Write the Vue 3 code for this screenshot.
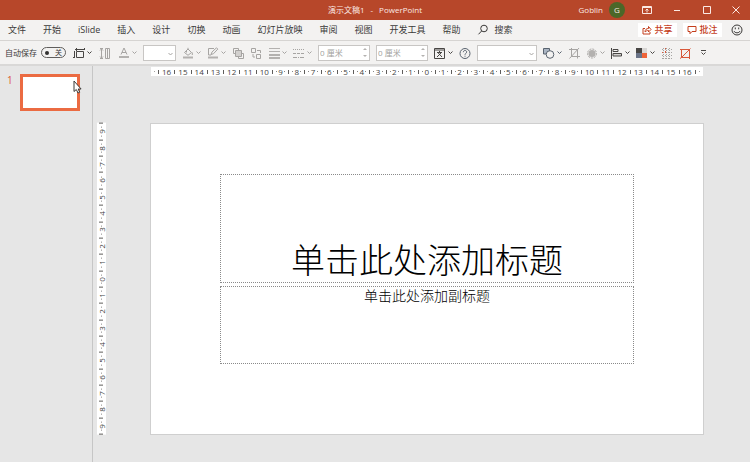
<script setup>
import { ref } from 'vue'

const tabs = ['文件', '开始', 'iSlide', '插入', '设计', '切换', '动画', '幻灯片放映', '审阅', '视图', '开发工具', '帮助']
const autosave = ref(false)
const spinA = ref('0 厘米')
const spinB = ref('0 厘米')

const scale = (n) => Array.from({ length: n * 2 + 1 }, (_, i) => Math.abs(i - n))
const across = scale(16)
const down = scale(9)
</script>

<template>
  <div class="app">
    <header class="titlebar">
      <span></span>
      <div class="doc-name"><span>演示文稿1</span><span>-</span><span>PowerPoint</span></div>
      <div class="account">
        <span class="user">Goblin</span>
        <span class="avatar">G</span>
        <button class="win" aria-label="功能区显示选项">
          <svg viewBox="0 0 12 12"><path d="M1.5 2.5h9v7h-9zM1.5 3.5h9M6 8.5v-3M4.5 6.5 6 5l1.500 1.500" /></svg>
        </button>
        <button class="win" aria-label="最小化"><svg viewBox="0 0 12 12"><path d="M3 6.500h6" /></svg></button>
        <button class="win" aria-label="最大化"><svg viewBox="0 0 12 12"><path d="M2.500 2.500h7v7h-7z" /></svg></button>
        <button class="win" aria-label="关闭"><svg viewBox="0 0 12 12"><path d="m2.500 2.500 7 7M9.500 2.500l-7 7" /></svg></button>
      </div>
    </header>

    <nav class="ribbon">
      <button v-for="t in tabs" :key="t" class="tab">{{ t }}</button>
      <button class="tab search">
        <svg viewBox="0 0 12 12"><circle cx="7" cy="4.500" r="3.300" /><path d="M4.600 7 1.500 10.300" /></svg>
        <span>搜索</span>
      </button>
      <div class="actions">
        <button class="action">
          <svg viewBox="0 0 10 10"><path d="M3 3.500H1v5.500h7V7M3 7c0-2.500 1.500-3.500 3.500-3.500V1.500L9 4.500 6.500 7V5.500C5 5.500 4 6 3 7z" /></svg>
          <span>共享</span>
        </button>
        <button class="action">
          <svg viewBox="0 0 10 10"><path d="M1 1.500h8v5H5L3 8.700V6.500H1z" /></svg>
          <span>批注</span>
        </button>
        <button class="smile" aria-label="反馈">
          <svg viewBox="0 0 12 12"><circle cx="6" cy="6" r="5" /><path d="M4.300 3.500v1.800M7.700 3.500v1.800M3 7c.8 2.400 5.200 2.400 6 0" /></svg>
        </button>
      </div>
    </nav>

    <div class="toolbar">
      <label class="autosave">
        <span>自动保存</span>
        <input v-model="autosave" type="checkbox" role="switch" />
        <span class="switch"><i></i><b>关</b></span>
      </label>
      <div class="lead-tools">
        <button class="tool dark" aria-label="大小">
          <svg class="ico" viewBox="0 0 12 12"><path d="M3.500 4.500h7v6h-7zM2 2.500h10M3.500 1v3M11.500 1v2M1.500 4v7M0 10.500h2" /></svg>
          <svg class="chev" viewBox="0 0 5 12"><path d="m.5 4.500 2 2 2-2" /></svg>
        </button>
        <button class="tool" aria-label="高度">
          <svg class="ico" viewBox="0 0 12 12"><path d="M6.500 1.500h4v10h-4zM8.500 1.500v10M2.500 2v9M1 3.500 2.500 2 4 3.500M1 9.500 2.500 11 4 9.500M1 1.500h3M1 11.500h3" /></svg>
        </button>
        <button class="tool" aria-label="字体颜色">
          <svg class="ico" viewBox="0 0 12 12"><path d="M3 7.500 6 1l3 6.500M4 5.500h4" /><path class="bar" d="M1 9h10v2H1z" /></svg>
          <svg class="chev" viewBox="0 0 5 12"><path d="m.5 4.500 2 2 2-2" /></svg>
        </button>
      </div>
      <span class="combo small">
        <select aria-label="字号"><option></option></select>
        <svg class="chev" viewBox="0 0 5 12"><path d="m.5 6 2 2 2-2" /></svg>
      </span>
      <button class="tool" aria-label="形状填充">
        <svg class="ico" viewBox="0 0 12 12"><path d="M2.500 5.500 6 2l3.500 3.500L6 8.300zM6 2V.8M4.500 3.500v2M10.300 5.500v2.500" /><path class="bar" d="M1 9.500h10v2H1z" /></svg>
        <svg class="chev" viewBox="0 0 5 12"><path d="m.5 4.500 2 2 2-2" /></svg>
      </button>
      <button class="tool" aria-label="形状轮廓">
        <svg class="ico" viewBox="0 0 12 12"><path d="M7 1.500H1.500v6.500H4M4 7.500 5 5l4.500-4.200 1.300 1.300L6.500 6.700z" /><path class="bar" d="M1 9.500h10v2H1z" /></svg>
        <svg class="chev" viewBox="0 0 5 12"><path d="m.5 4.500 2 2 2-2" /></svg>
      </button>
      <button class="tool" aria-label="上移一层">
        <svg class="ico" viewBox="0 0 12 12"><path d="M1.500 1.500h5v5h-5zM6.500 6.500h5v5h-5z" /><path class="front" d="M3.500 3.500h6v6h-6z" /></svg>
      </button>
      <button class="tool" aria-label="组合">
        <svg class="ico" viewBox="0 0 12 12"><path d="M1.500 1.500h4v4h-4zM6.500 7.500h4v4h-4zM7 3.500h3.500V6M3 7v3h2" /></svg>
      </button>
      <button class="tool" aria-label="线条粗细">
        <svg class="ico" viewBox="0 0 12 12"><path class="bar" d="M1 1h11v1H1zM1 4h11v1H1zM1 7h11v2H1zM1 10h11v2H1z" /></svg>
        <svg class="chev" viewBox="0 0 5 12"><path d="m.5 4.500 2 2 2-2" /></svg>
      </button>
      <button class="tool" aria-label="虚线">
        <svg class="ico" viewBox="0 0 12 12"><path d="M0 2.500h12" stroke-dasharray="1 1" /><path d="M0 6.500h12" stroke-dasharray="3 1" /><path d="M0 10.500h12" stroke-dasharray="4 1 1 1" /></svg>
        <svg class="chev" viewBox="0 0 5 12"><path d="m.5 4.500 2 2 2-2" /></svg>
      </button>
      <span class="spin">
        <input v-model="spinA" aria-label="形状高度" />
        <span class="steps">
          <button aria-label="增加"><svg viewBox="0 0 6 4"><path d="m3 1 2 2H1z" /></svg></button>
          <button aria-label="减少"><svg viewBox="0 0 6 4"><path d="m3 3 2-2H1z" /></svg></button>
        </span>
      </span>
      <span class="spin">
        <input v-model="spinB" aria-label="形状宽度" />
        <span class="steps">
          <button aria-label="增加"><svg viewBox="0 0 6 4"><path d="m3 1 2 2H1z" /></svg></button>
          <button aria-label="减少"><svg viewBox="0 0 6 4"><path d="m3 3 2-2H1z" /></svg></button>
        </span>
      </span>
      <button class="tool dark" aria-label="文本框">
        <svg class="ico" viewBox="0 0 12 12"><path d="M.500 1.500h10v10H.500zM.500 3h10M3 5.500h5M5.500 4v1.500M7.500 5.500 3 10M3.800 5.500 8 10" /></svg>
        <svg class="chev" viewBox="0 0 5 12"><path d="m.5 4.500 2 2 2-2" /></svg>
      </button>
      <button class="tool slate" aria-label="帮助">
        <svg class="ico" viewBox="0 0 12 12"><circle cx="6" cy="6.500" r="5" /><path d="M4.300 5.200c0-2.300 3.400-2.200 3.400-.2C7.700 6.300 6 6.200 6 7.800M6 8.700v1" /></svg>
      </button>
      <span class="combo">
        <select aria-label="字体"><option></option></select>
        <svg class="chev" viewBox="0 0 5 12"><path d="m.5 6 2 2 2-2" /></svg>
      </span>
      <button class="tool slate" aria-label="形状">
        <svg class="ico" viewBox="0 0 12 12"><path class="fill" d="M.500 1.500h6v5.500h-6z" /><circle class="hole" cx="7" cy="7.500" r="3.800" /></svg>
        <svg class="chev" viewBox="0 0 5 12"><path d="m.5 4.500 2 2 2-2" /></svg>
      </button>
      <button class="tool" aria-label="裁剪">
        <svg class="ico" viewBox="0 0 12 12"><path d="M3.500 1v8.500h8.500M1 2.500h8.500V11.500M1.500 11.500 11 1" /></svg>
      </button>
      <button class="tool" aria-label="效果">
        <svg class="ico" viewBox="0 0 12 12"><circle cx="6" cy="6.500" r="4.500" stroke-dasharray="2 1" /><circle class="bar" cx="6" cy="6.500" r="3.600" /></svg>
        <svg class="chev" viewBox="0 0 5 12"><path d="m.5 4.500 2 2 2-2" /></svg>
      </button>
      <button class="tool dark" aria-label="对齐">
        <svg class="ico" viewBox="0 0 12 12"><path d="M.500 1v11M2 2.500h5v2H2z" /><path class="bar-pale" d="M2 6.500h8.500v2.500H2z" /></svg>
        <svg class="chev" viewBox="0 0 5 12"><path d="m.5 4.500 2 2 2-2" /></svg>
      </button>
      <button class="tool dark" aria-label="主题颜色">
        <svg class="ico swatch" viewBox="0 0 12 12"><path fill="#484644" d="M0 1h6v5H0z" /><path fill="#d8d6d4" d="M6 1h5v5H6z" /><path fill="#6b7488" d="M0 6h6v5H0z" /><path fill="#ee6338" d="M6 6h5v5H6z" /></svg>
        <svg class="chev" viewBox="0 0 5 12"><path d="m.5 4.500 2 2 2-2" /></svg>
      </button>
      <button class="tool" aria-label="网格线">
        <svg class="ico" viewBox="0 0 12 12"><path d="M1 2.500h10M1 5.500h10M1 8.500h10M1 11.500h10" stroke-dasharray="1 2" /><path d="M2.500 1v11M5.500 1v11M8.500 1v11" stroke-dasharray="1 1" /><path class="warm" d="M1 5.500h6M4.500 1v6" stroke-dasharray="1 2" /></svg>
      </button>
      <button class="tool red" aria-label="图片裁剪">
        <svg class="ico" viewBox="0 0 12 12"><path d="M2.500 2.500h8v8h-8zM1 2.500h2M2.500 10.500 11.500 1.500M1 11.500l1.500-1M10.500 10v2" /></svg>
      </button>
      <button class="tool dark" aria-label="自定义快速访问工具栏">
        <svg class="ico" viewBox="0 0 12 12"><path d="M4 3.500h5M4.500 5.500l2 2 2-2" /></svg>
      </button>
    </div>

    <div class="workspace">
      <aside class="slides">
        <span class="num">1</span>
        <button class="thumb" aria-label="幻灯片 1">
          <svg class="pointer" viewBox="0 0 9 14"><path d="M1 1v10.500l2.300-2L5 13l1.700-.8L5.200 9h2.900z" /></svg>
        </button>
      </aside>

      <main class="canvas">
        <div class="ruler top">
          <span class="dot"></span>
          <template v-for="(n, i) in across" :key="i">
            <i class="tick"></i>
            <span class="cell" :class="{ wide: n > 9 }">{{ n }}</span>
          </template>
          <i class="tick"></i>
          <span class="dot"></span>
        </div>
        <div class="ruler side">
          <template v-for="(n, i) in down" :key="i">
            <i class="tick"></i>
            <span class="cell">{{ n }}</span>
          </template>
          <i class="tick"></i>
        </div>
        <section class="slide">
          <h1 class="holder title">单击此处添加标题</h1>
          <p class="holder subtitle">单击此处添加副标题</p>
        </section>
      </main>
    </div>
  </div>
</template>

<style>
body {
  margin: 0;
  background: #e6e6e6;
}
</style>

<style scoped>
.app {
  display: flex;
  flex-direction: column;
  min-height: 100vh;
  font: 9px/12px "Open Sans", "Noto Sans CJK SC", sans-serif;
  color: #3b3a39;
  background: #e6e6e6;
}
button {
  padding: 0;
  border: 0;
  background: none;
  font: inherit;
  color: inherit;
}
svg {
  display: block;
  fill: none;
  stroke: currentColor;
}

.titlebar {
  display: grid;
  grid-template-columns: 1fr auto 1fr;
  align-items: center;
  height: 20px;
  background: #b7472a;
  color: #fbe9e4;
  font-size: 8px;
}
.doc-name {
  display: flex;
  gap: 6px;
}
.account {
  display: flex;
  align-items: center;
  justify-content: flex-end;
}
.user {
  font-size: 8px;
}
.avatar {
  width: 16px;
  margin: 0 7px 0 6px;
  border-radius: 50%;
  background: #4b6728;
  line-height: 16px;
  text-align: center;
}
.win {
  display: grid;
  place-items: center;
  width: 30px;
  height: 20px;
}
.win:last-child {
  width: 28px;
}
.win svg {
  width: 12px;
  height: 12px;
}

.ribbon {
  display: flex;
  align-items: center;
  gap: 17px;
  height: 20px;
  padding: 0 7px 0 8px;
  border-bottom: 1px solid #d6d4d2;
  background: #f3f2f1;
  white-space: nowrap;
}
.search {
  display: flex;
  align-items: center;
  gap: 5px;
}
.search svg {
  width: 12px;
  height: 12px;
}
.actions {
  display: flex;
  align-items: center;
  gap: 6px;
  margin-left: auto;
}
.action {
  display: flex;
  align-items: center;
  justify-content: center;
  gap: 2px;
  width: 39px;
  height: 14px;
  background: #fff;
  color: #c43e1c;
  font-weight: 500;
}
.action svg {
  width: 10px;
  height: 10px;
}
.smile {
  margin-left: 3px;
}
.smile svg {
  width: 12px;
  height: 12px;
}

.toolbar {
  display: flex;
  align-items: center;
  gap: 6px;
  height: 23px;
  padding-left: 5px;
  border-bottom: 2px solid #d9d8d7;
  background: #f3f2f1;
}
.autosave {
  display: flex;
  align-items: center;
  gap: 4px;
  font-size: 8px;
  white-space: nowrap;
}
.autosave input {
  position: absolute;
  opacity: 0;
}
.switch {
  box-sizing: border-box;
  display: flex;
  align-items: center;
  justify-content: space-between;
  width: 25px;
  height: 11px;
  padding: 0 3px;
  border: 1px solid #605e5c;
  border-radius: 6px;
}
.switch i {
  width: 4px;
  height: 4px;
  border-radius: 50%;
  background: #323130;
}
.switch b {
  font-size: 7px;
  font-weight: 400;
  line-height: 9px;
}
.lead-tools {
  display: flex;
  gap: 7px;
  padding-left: 1px;
}
.tool {
  display: flex;
  gap: 2px;
  color: #a6a4a2;
}
.dark {
  color: #484644;
}
.slate {
  color: #59636f;
}
.red {
  color: #d9583b;
}
.ico {
  width: 12px;
  height: 12px;
}
.chev {
  width: 5px;
  height: 12px;
}
.bar {
  fill: #b3b1af;
  stroke: none;
}
.front {
  fill: #d2d0ce;
}
.bar-pale {
  fill: #d2d0ce;
}
.fill {
  fill: #a9b4c2;
}
.hole {
  fill: #f3f2f1;
}
.swatch {
  stroke: none;
}
.warm {
  stroke: #d9583b;
}
.combo,
.spin {
  box-sizing: border-box;
  display: flex;
  align-items: center;
  height: 16px;
  border: 1px solid #c8c6c4;
  background: #fff;
}
.combo {
  width: 60px;
  padding-right: 2px;
  color: #a6a4a2;
}
.small {
  width: 33px;
}
.combo select {
  flex: 1;
  min-width: 0;
  height: 14px;
  padding: 0;
  border: 0;
  appearance: none;
  background: none;
}
.spin {
  width: 52px;
}
.spin input {
  flex: 1;
  min-width: 0;
  padding: 0 0 0 1px;
  border: 0;
  background: none;
  font: inherit;
  font-size: 8px;
  color: #a19f9d;
}
.steps {
  display: flex;
  flex-direction: column;
  gap: 3px;
  padding-right: 1px;
}
.steps svg {
  width: 6px;
  height: 4px;
  fill: #b3b1af;
  stroke: none;
}

.workspace {
  display: flex;
  flex: 1;
}
.slides {
  display: flex;
  align-items: flex-start;
  box-sizing: border-box;
  width: 93px;
  padding: 8px 0 0 7px;
  border-right: 1px solid #c6c6c6;
}
.num {
  width: 13px;
  color: #dd5a33;
  font-size: 10px;
}
.thumb {
  position: relative;
  box-sizing: border-box;
  width: 60px;
  height: 37px;
  border: 3px solid #eb6b42;
  background: #fff;
}
.pointer {
  position: absolute;
  top: 3px;
  left: 50px;
  width: 9px;
  height: 14px;
  fill: #fff;
  stroke: #3b3a39;
}

.canvas {
  display: grid;
  flex: 1;
  grid-template-columns: 9px 1fr;
  grid-template-rows: 9px auto;
  column-gap: 44px;
  row-gap: 47px;
  align-content: start;
  padding: 1px 46px 0 4px;
}
.ruler {
  display: flex;
  align-items: center;
  background: #fff;
  color: #444;
  font-size: 8px;
  line-height: 9px;
}
.top {
  grid-column: 2;
  height: 9px;
  margin: 0 1px;
}
.side {
  align-self: stretch;
  width: 9px;
  writing-mode: vertical-rl;
  transform: rotate(180deg);
}
.tick {
  flex: none;
  inline-size: 1px;
  block-size: 4px;
  background: #605e5c;
}
.cell {
  display: flex;
  flex: 1 1 0;
  align-items: center;
  justify-content: space-between;
  min-width: 0;
  min-height: 0;
}
.wide {
  justify-content: center;
}
.cell:not(.wide)::before,
.cell:not(.wide)::after {
  content: "";
  inline-size: 1px;
  block-size: 1px;
  margin-inline: 3px 0;
  background: #8a8886;
}
.cell:not(.wide)::after {
  margin-inline: 0 3px;
}
.dot {
  flex: none;
  width: 1px;
  height: 1px;
  margin: 0 3px;
  background: #a6a4a2;
}

.slide {
  box-sizing: border-box;
  display: grid;
  grid-template-columns: 69fr 415fr 69fr;
  grid-template-rows: 50fr 109fr 3fr 78fr 70fr;
  aspect-ratio: 16 / 9;
  border: 1px solid #cfcfcf;
  background: #fff;
  color: #000;
}
.holder {
  display: flex;
  justify-content: center;
  margin: 0;
  border: 1px dotted #8a8a8a;
  font-family: "Noto Sans CJK SC", sans-serif;
}
.title {
  grid-area: 2 / 2;
  align-items: flex-end;
  font-size: 34px;
  font-weight: 200;
  line-height: 46px;
}
.subtitle {
  grid-area: 4 / 2;
  align-items: flex-start;
  font-size: 14px;
  font-weight: 300;
  line-height: 16px;
}
</style>
